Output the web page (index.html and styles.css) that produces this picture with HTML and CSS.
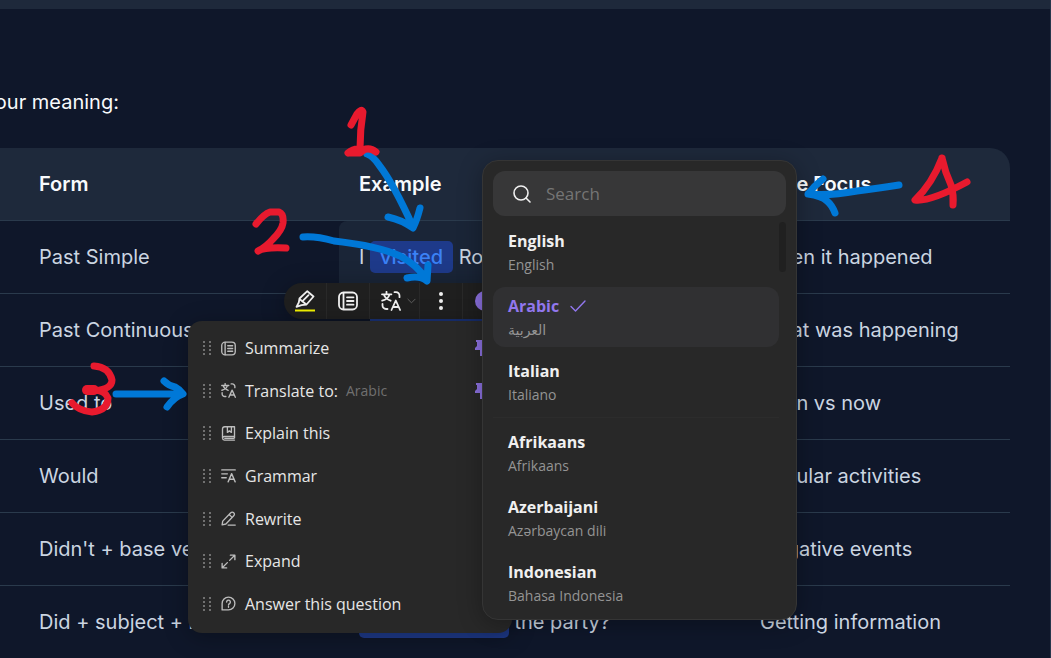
FILE: index.html
```html
<!DOCTYPE html>
<html lang="en">
<head>
    <meta charset="UTF-8">
    <meta name="viewport" content="width=device-width, initial-scale=1.0">
    <title>Past Tense Forms</title>
    <link rel="stylesheet" href="styles.css">
</head>
<body>
    <!-- Shared icons -->
    <svg class="sprite" aria-hidden="true">
        <symbol id="icon-summary" viewBox="0 0 20 20">
            <rect x="1" y="1.5" width="18" height="17" rx="4.5"/>
            <path d="M5.5 1.8v16.4M9 6.3h6.5M9 10h6.5M9 13.7h6.5"/>
        </symbol>
        <symbol id="icon-translate" viewBox="0 0 20 20">
            <path d="M5.5 .8v2M1 3.3h9.4M2.8 3.5c1 3 3.300 5 6.800 6.200M8.600 3.500c-1 3-3.600 5.200-7.400 6.200M13.500 1.200h1.500a3.500 3.500 0 0 1 3.500 3.500v1.500M1.500 13v1.500a3.500 3.500 0 0 0 3.500 3.500h1.500M10.500 19l4.300-9.500 4.300 9.500M12 16h5.600"/>
        </symbol>
        <symbol id="icon-book" viewBox="0 0 20 20">
            <path d="M2 16V4a3 3 0 0 1 3-3h13v13H4.500a2.300 2.300 0 0 0 0 4.800H18M18 14v2M8.500 1v7.500l2.700-2 2.700 2V1M5 16.400h12"/>
        </symbol>
        <symbol id="icon-grammar" viewBox="0 0 20 20">
            <path d="M1 2.500h18M1 7.800h7.500M1 13h6M9.500 18.500l4.700-11 4.700 11M11.200 15h6"/>
        </symbol>
        <symbol id="icon-pen" viewBox="0 0 20 20">
            <path d="M1.500 18.500l.8-5L13 2.300a2.700 2.700 0 0 1 4 0 2.700 2.700 0 0 1 0 4L6.500 17.300zM10.800 4.500l4 4M9.500 18.800H19"/>
        </symbol>
        <symbol id="icon-expand" viewBox="0 0 20 20">
            <path d="M12.500 1.500h6v6M18 2l-6.500 6.500M7.500 18.500h-6v-6M2 18l6.500-6.500"/>
        </symbol>
        <symbol id="icon-question" viewBox="0 0 20 20">
            <path d="M1.500 18.500V10A8.500 8.500 0 1 1 10 18.500zM7.500 8a2.500 2.500 0 1 1 3.800 2.100c-.9.500-1.300 1-1.300 1.900M10 14v1"/>
        </symbol>
        <symbol id="icon-grip" viewBox="0 0 8 14">
            <path d="M0 0h2v2H0zM6 0h2v2H6zM0 4h2v2H0zM6 4h2v2H6zM0 8h2v2H0zM6 8h2v2H6zM0 12h2v2H0zM6 12h2v2H6z"/>
        </symbol>
        <symbol id="icon-pin" viewBox="0 0 12 16">
            <path d="M1 0h10v2h-1v4l2 2v2H7v6H5v-6H0V8l2-2V2H1z"/>
        </symbol>
    </svg>

    <div class="topbar"></div>
    <main class="lesson">
        <p class="intro">your meaning:</p>
        <table class="forms-table">
            <thead>
                <tr>
                    <th class="col-edge"></th>
                    <th class="col-form">Form</th>
                    <th class="col-example">Example</th>
                    <th>Time Focus</th>
                </tr>
            </thead>
            <tbody>
                <tr>
                    <td></td>
                    <td>Past Simple</td>
                    <td class="active">I <mark>visited</mark> Rome.</td>
                    <td>When it happened</td>
                </tr>
                <tr>
                    <td></td>
                    <td>Past Continuous</td>
                    <td>I <mark>was cooking</mark> dinner.</td>
                    <td>What was happening</td>
                </tr>
                <tr>
                    <td></td>
                    <td>Used to</td>
                    <td>I <mark>used to</mark> smoke.</td>
                    <td>Then vs now</td>
                </tr>
                <tr>
                    <td></td>
                    <td>Would</td>
                    <td>We <mark>would</mark> play.</td>
                    <td>Regular activities</td>
                </tr>
                <tr>
                    <td></td>
                    <td>Didn't + base verb</td>
                    <td>I <mark>didn't go</mark>.</td>
                    <td>Negative events</td>
                </tr>
                <tr>
                    <td></td>
                    <td>Did + subject + base</td>
                    <td><mark>Did you enjoy</mark> the party?</td>
                    <td>Getting information</td>
                </tr>
            </tbody>
        </table>
    </main>

    <!-- Selection toolbar -->
    <div class="toolbar">
        <button class="tool" aria-label="Highlight">
            <svg class="icon-highlight" viewBox="0 0 20 22">
                <path d="M4.500 8.500L12.300 1.200 18.500 6.500 11.500 14.500 6.500 15.200 1.500 16.800 3.800 12.500zM4.500 9l6.500 5.200M8.500 10.200l5-5"/>
                <path class="ink" d="M0 20.500h20"/>
            </svg>
        </button>
        <button class="tool" aria-label="Summarize"><svg class="icon"><use href="#icon-summary"/></svg></button>
        <button class="tool tool-wide" aria-label="Translate">
            <svg class="icon"><use href="#icon-translate"/></svg>
            <svg class="chevron" viewBox="0 0 10 6"><path d="M1 1l4 4 4-4"/></svg>
        </button>
        <button class="tool" aria-label="More">
            <svg class="icon-dots" viewBox="0 0 4 18"><circle cx="2" cy="2" r="2"/><circle cx="2" cy="9" r="2"/><circle cx="2" cy="16" r="2"/></svg>
        </button>
        <button class="tool" aria-label="Assistant"><span class="orb"></span></button>
    </div>

    <!-- More actions -->
    <div class="menu">
        <button class="menu-item">
            <svg class="grip"><use href="#icon-grip"/></svg>
            <svg class="menu-icon"><use href="#icon-summary"/></svg>
            <span>Summarize</span>
            <svg class="pin"><use href="#icon-pin"/></svg>
        </button>
        <button class="menu-item">
            <svg class="grip"><use href="#icon-grip"/></svg>
            <svg class="menu-icon"><use href="#icon-translate"/></svg>
            <span>Translate to:</span>
            <span class="hint">Arabic</span>
            <svg class="pin"><use href="#icon-pin"/></svg>
        </button>
        <button class="menu-item">
            <svg class="grip"><use href="#icon-grip"/></svg>
            <svg class="menu-icon"><use href="#icon-book"/></svg>
            <span>Explain this</span>
        </button>
        <button class="menu-item">
            <svg class="grip"><use href="#icon-grip"/></svg>
            <svg class="menu-icon"><use href="#icon-grammar"/></svg>
            <span>Grammar</span>
        </button>
        <button class="menu-item">
            <svg class="grip"><use href="#icon-grip"/></svg>
            <svg class="menu-icon"><use href="#icon-pen"/></svg>
            <span>Rewrite</span>
        </button>
        <button class="menu-item">
            <svg class="grip"><use href="#icon-grip"/></svg>
            <svg class="menu-icon"><use href="#icon-expand"/></svg>
            <span>Expand</span>
        </button>
        <button class="menu-item">
            <svg class="grip"><use href="#icon-grip"/></svg>
            <svg class="menu-icon"><use href="#icon-question"/></svg>
            <span>Answer this question</span>
        </button>
    </div>

    <!-- Language picker -->
    <div class="languages">
        <label class="search">
            <svg class="search-icon" viewBox="0 0 18 18"><circle cx="8" cy="8" r="7"/><path d="M13 13l4 4"/></svg>
            <input type="text" placeholder="Search" aria-label="Search">
        </label>
        <div class="language-list">
            <button class="language"><span class="name">English</span><span class="native">English</span></button>
            <button class="language selected">
                <span class="name">Arabic <svg class="check" viewBox="0 0 16 12"><path d="M1 6.500l4.500 4.500L15 1"/></svg></span>
                <span class="native" lang="ar">العربية</span>
            </button>
            <button class="language"><span class="name">Italian</span><span class="native">Italiano</span></button>
            <hr class="divider">
            <button class="language"><span class="name">Afrikaans</span><span class="native">Afrikaans</span></button>
            <button class="language"><span class="name">Azerbaijani</span><span class="native">Azərbaycan dili</span></button>
            <button class="language"><span class="name">Indonesian</span><span class="native">Bahasa Indonesia</span></button>
            <div class="scroll-thumb"></div>
        </div>
    </div>

    <!-- Hand-drawn step markers -->
    <svg class="notes" viewBox="0 0 1051 658" aria-hidden="true">
        <g class="arrow">
            <path d="M367 154Q373 156 379 165C393 183 404 207 413 227M388 217Q402 220 413 228Q417 220 420 208"/>
            <path d="M303 237Q316 236 334 241C360 244 385 249 400 256Q417 265 427 280M407 278Q420 275 427 281L428 265"/>
            <path d="M116 394H182M164 381Q169 386 175 387Q179 389 183 394Q174 397 167 407"/>
            <path d="M899 185Q880 188 857 191Q830 196 808 194Q814 186 823 179M808 194Q822 196 827 201Q832 205 835 213"/>
        </g>
        <g class="number">
            <path d="M351 125L357 114Q361 108 363 112Q360 130 360 149M348 153Q355 147 363 150Q370 147 376 152M350 153H360L364 150"/>
            <path d="M256 224Q264 214 270 212H279Q284 214 283 223Q282 230 273 239Q266 247 258 251Q264 247 286 248"/>
            <path d="M94 366Q109 367 112 380Q112 390 91 391H87Q104 388 108 398Q108 410 92 412Q79 411 72 403"/>
            <path class="blot" d="M87 390H94"/>
            <path d="M942 158Q932 184 915 200Q930 202 967 182M942 158Q945 172 951 185Q954 195 953 205"/>
        </g>
    </svg>
</body>
</html>
```
FILE: styles.css
```css
* {
    box-sizing: border-box;
}
body {
    margin: 0;
    min-height: 100vh;
    overflow: hidden;
    background: #0f172a;
    border-right: 1px solid #27364b;
    color: #f8fafc;
    font-family: Inter, sans-serif;
    font-size: 20px;
    line-height: 32px;
}
button {
    border: none;
    padding: 0;
    background: none;
    color: inherit;
    font: inherit;
    text-align: left;
    cursor: pointer;
}
svg {
    display: block;
    flex: none;
    fill: none;
    stroke: currentColor;
    stroke-linecap: round;
    stroke-linejoin: round;
}
.sprite {
    position: absolute;
    width: 0;
    height: 0;
}
.topbar {
    height: 9px;
    background: #1e293b;
}

/* Lesson table */
.lesson {
    margin-left: -16px;
    padding: 77px 40px 0 0;
}
.intro {
    margin: 0 0 30px;
}
.forms-table {
    width: 100%;
    table-layout: fixed;
    border-collapse: separate;
    border-spacing: 0;
    white-space: nowrap;
}
.forms-table th,
.forms-table td {
    padding: 20px;
    border-bottom: 1px solid #2a3a4c;
    text-align: left;
}
.forms-table th {
    background: #1e293b;
    font-weight: 600;
}
.forms-table th:last-child {
    border-top-right-radius: 20px;
}
.forms-table td {
    color: #cbd5e1;
}
.forms-table .col-edge {
    width: 35px;
    padding: 0;
}
.col-form {
    width: 320px;
}
.col-example {
    width: 401px;
}
.forms-table .active {
    background: #1a2537;
    border-top-left-radius: 8px;
}
mark {
    padding: 4px 10px;
    border-radius: 5px;
    background: #1e3a8a;
    color: #3b82f6;
    font-weight: 500;
}

/* Floating panels */
.toolbar,
.menu,
.languages {
    position: absolute;
    font-family: "Open Sans", "DejaVu Sans", sans-serif;
    font-size: 16px;
    line-height: 24px;
    box-shadow: 0 4px 24px rgba(0, 0, 0, 0.3);
}
.toolbar {
    top: 283px;
    left: 284px;
    display: flex;
    height: 36px;
    border-radius: 18px;
    background: #1f1f1f;
    color: #f0f0f0;
}
.tool {
    display: flex;
    align-items: center;
    justify-content: center;
    width: 43px;
    border-right: 1px solid #292929;
}
.tool:last-child {
    border-right: none;
}
.tool-wide {
    gap: 6px;
    width: 50px;
    padding-left: 7px;
}
.icon {
    width: 20px;
    height: 20px;
    stroke-width: 1.8;
}
.icon-highlight {
    width: 20px;
    height: 22px;
    stroke-width: 1.8;
}
.ink {
    stroke: #f2f200;
    stroke-width: 2;
    stroke-linecap: butt;
}
.chevron {
    width: 9px;
    height: 6px;
    color: #666;
}
.icon-dots {
    width: 4px;
    height: 18px;
    fill: currentColor;
    stroke: none;
}
.orb {
    width: 20px;
    height: 20px;
    border-radius: 50%;
    background: #8b70df;
}
.menu {
    top: 321px;
    left: 188px;
    display: grid;
    grid-auto-rows: 1fr;
    width: 324px;
    height: 312px;
    padding: 6px 25px 8px 15px;
    border-radius: 14px;
    background: #282828;
    color: #e6e6e6;
    font-weight: 500;
}
.menu-item {
    display: flex;
    align-items: center;
}
.grip {
    width: 8px;
    height: 14px;
    margin-right: 10px;
    color: #707070;
    fill: currentColor;
    stroke: none;
}
.menu-icon {
    width: 15px;
    height: 15px;
    margin-right: 9px;
    color: #bdbdbd;
    stroke-width: 1.8;
}
.hint {
    margin-left: 8px;
    color: #707070;
    font-size: 14px;
    font-weight: 400;
}
.pin {
    width: 12px;
    height: 16px;
    margin-left: auto;
    fill: #8b70df;
    stroke: none;
}
.languages {
    top: 160px;
    left: 482px;
    width: 315px;
    padding: 10px 10px 6px;
    border: 1px solid #353535;
    border-radius: 16px;
    background: #282828;
}
.search {
    display: flex;
    align-items: center;
    gap: 15px;
    height: 45px;
    margin-bottom: 6px;
    padding: 0 20px;
    border-radius: 12px;
    background: #373738;
}
.search-icon {
    width: 18px;
    height: 18px;
    color: #f0f0f0;
    stroke-width: 1.6;
}
.search input {
    width: 100%;
    border: none;
    outline: none;
    padding: 0;
    background: transparent;
    color: #f0f0f0;
    font: inherit;
    font-size: 17px;
}
.search input::placeholder {
    color: #757575;
}
.language-list {
    position: relative;
    display: flex;
    flex-direction: column;
    gap: 5px;
    padding-right: 7px;
}
.language {
    display: flex;
    flex-direction: column;
    height: 60px;
    padding: 7px 15px 5px;
    border-radius: 12px;
}
.language.selected {
    background: #303032;
}
.name {
    display: flex;
    align-items: center;
    gap: 11px;
    color: #f0f0f0;
    font-weight: 700;
}
.selected .name {
    color: #9277ee;
}
.native {
    color: #949494;
    font-size: 14px;
}
.check {
    width: 16px;
    height: 12px;
    stroke-width: 1.4;
}
.divider {
    width: 100%;
    height: 1px;
    margin: 0;
    border: none;
    background: #2c2c2c;
}
.scroll-thumb {
    position: absolute;
    top: 0;
    right: 0;
    width: 7px;
    height: 50px;
    border-radius: 4px;
    background: #202020;
}

/* Step markers */
.notes {
    position: absolute;
    top: 0;
    left: 0;
    width: 1051px;
    height: 658px;
    stroke-width: 7;
    pointer-events: none;
}
.arrow {
    stroke: #0078d7;
}
.number {
    stroke: #e81a2e;
}
.blot {
    stroke-width: 10;
}
```
